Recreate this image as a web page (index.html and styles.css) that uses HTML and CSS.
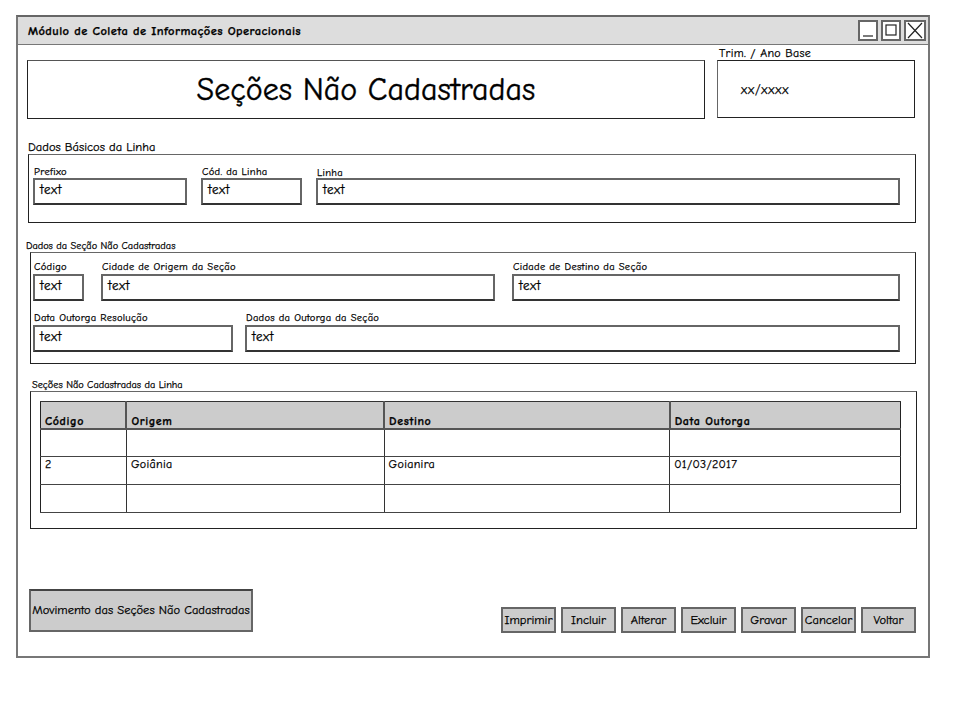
FILE: index.html
```html
<!DOCTYPE html>
<html lang="pt-BR">
<head>
<meta charset="utf-8">
<title>Módulo de Coleta de Informações Operacionais</title>
<link rel="stylesheet" href="styles.css">
</head>
<body>
<div class="window">
  <div class="titlebar">
    <span class="wtitle">Módulo de Coleta de Informações Operacionais</span>
    <div class="wctrls">
      <span class="wbtn"><svg width="16" height="17" viewBox="0 0 16 17"><line x1="3" y1="14" x2="13" y2="14" stroke="#222" stroke-width="1.2"/></svg></span>
      <span class="wbtn"><svg width="16" height="17" viewBox="0 0 16 17"><rect x="3" y="3" width="10" height="10" fill="none" stroke="#222" stroke-width="1.2"/></svg></span>
      <span class="wbtn"><svg width="18" height="17" viewBox="0 0 18 17"><path d="M2 1 L16 16 M16 1 L2 16" stroke="#222" stroke-width="1.2"/></svg></span>
    </div>
  </div>

  <div class="content">
    <div class="toprow">
      <div class="headbox">Seções Não Cadastradas</div>
      <div class="trim">
        <div class="trimlabel">Trim. / Ano Base</div>
        <div class="trimbox">xx/xxxx</div>
      </div>
    </div>

    <div class="glabel g1">Dados Básicos da Linha</div>
    <div class="group grp1">
      <div class="frow">
        <div class="field w-prefixo"><div class="flabel">Prefixo</div><div class="input">text</div></div>
        <div class="field w-cod"><div class="flabel">Cód. da Linha</div><div class="input">text</div></div>
        <div class="field w-linha"><div class="flabel">Linha</div><div class="input">text</div></div>
      </div>
    </div>

    <div class="glabel small g2">Dados da Seção Não Cadastradas</div>
    <div class="group grp2">
      <div class="frow r1">
        <div class="field w-codigo"><div class="flabel">Código</div><div class="input">text</div></div>
        <div class="field w-orig"><div class="flabel">Cidade de Origem da Seção</div><div class="input">text</div></div>
        <div class="field w-dest"><div class="flabel">Cidade de Destino da Seção</div><div class="input">text</div></div>
      </div>
      <div class="frow r2">
        <div class="field w-data"><div class="flabel">Data Outorga Resolução</div><div class="input">text</div></div>
        <div class="field w-dados"><div class="flabel">Dados da Outorga da Seção</div><div class="input">text</div></div>
      </div>
    </div>

    <div class="glabel small g3">Seções Não Cadastradas da Linha</div>
    <div class="group grp3">
      <table class="grid">
        <colgroup><col class="c1"><col class="c2"><col class="c3"><col class="c4"></colgroup>
        <thead>
          <tr><th>Código</th><th>Origem</th><th>Destino</th><th>Data Outorga</th></tr>
        </thead>
        <tbody>
          <tr><td></td><td></td><td></td><td></td></tr>
          <tr><td>2</td><td>Goiânia</td><td>Goianira</td><td>01/03/2017</td></tr>
          <tr><td></td><td></td><td></td><td></td></tr>
        </tbody>
      </table>
    </div>

    <div class="bottom">
      <div class="bigbtn">Movimento das Seções Não Cadastradas</div>
      <div class="btns">
        <span class="btn">Imprimir</span>
        <span class="btn">Incluir</span>
        <span class="btn">Alterar</span>
        <span class="btn">Excluir</span>
        <span class="btn">Gravar</span>
        <span class="btn">Cancelar</span>
        <span class="btn">Voltar</span>
      </div>
    </div>
  </div>
</div>
</body>
</html>
```

FILE: styles.css
```css
* { box-sizing: border-box; }
html, body { margin: 0; padding: 0; background: #fff; }
body {
  font-family: "Comic Sans MS", "Comic Neue", "Open Sans", "DejaVu Sans", sans-serif;
  color: #000;
  -webkit-text-stroke: 0.25px #000;
}
.window {
  margin: 15px 0 0 16px;
  width: 914px;
  height: 643px;
  border: 2px solid #777;
  border-top-color: #666;
  background: #fff;
  display: flex;
  flex-direction: column;
}
.titlebar {
  height: 28px;
  background: #ddd;
  border-bottom: 1px solid #777;
  display: flex;
  align-items: center;
  justify-content: space-between;
  padding: 0 2px 0 10px;
}
.wtitle { font-weight: bold; font-size: 12.5px; letter-spacing: 0.4px; }
.wctrls { display: flex; gap: 3px; }
.wbtn {
  width: 20px; height: 21px;
  border: 2px solid #666;
  display: flex; align-items: center; justify-content: center;
  background: #fff;
}
.wbtn:last-child { width: 22px; }
.content { padding: 1px 12px 0 9px; flex: 1; }
.toprow { display: flex; gap: 12px; }
.headbox {
  margin-top: 14px;
  width: 678px; height: 59px;
  border: 1px solid #222;
  border-top-color: #555;
  display: flex; align-items: center; justify-content: center;
  font-size: 32px;
  -webkit-text-stroke: 0.4px #000;
}
.trimlabel { font-size: 12px; letter-spacing: 0.3px; height: 14px; line-height: 14px; padding-left: 2px; }
.trimbox {
  width: 198px; height: 58px;
  border: 1px solid #222;
  border-left-color: #666;
  font-size: 13px;
  letter-spacing: 0.8px;
  padding: 21px 0 0 23px;
}
.glabel { font-size: 12.5px; line-height: 14px; }
.glabel.small { font-size: 10.3px; line-height: 12px; }
.g1 { margin: 21px 0 0 1px; }
.g2 { margin: 17px 0 0 -1px; }
.g3 { margin: 15px 0 0 5px; }
.group {
  border: 1px solid #222;
  border-top-color: #666;
}
.grp1 { margin-left: 1px; width: 888px; height: 69px; padding: 11px 0 0 4px; }
.grp2 { margin-left: 3px; width: 886px; height: 112px; padding: 8px 0 0 2px; }
.grp3 { margin-left: 3px; width: 887px; height: 138px; padding: 9px 0 0 9px; }
.frow { display: flex; align-items: flex-end; }
.grp1 .frow { gap: 14px; }
.grp2 .frow { gap: 17px; }
.grp2 .r2 { gap: 12px; margin-top: 11px; }
.flabel { font-size: 10.5px; letter-spacing: 0.3px; line-height: 12px; height: 12px; padding-left: 1px; white-space: nowrap; }
.grp2 .flabel { line-height: 13px; height: 13px; }
.w-linha .flabel { height: 11px; }
.input {
  height: 27px;
  border: 2px solid #666;
  border-bottom-color: #333;
  font-size: 13px;
  letter-spacing: 0.6px;
  padding: 2px 0 0 5px;
}
.w-prefixo { width: 154px; }
.w-cod { width: 101px; }
.w-linha { width: 584px; }
.w-codigo { width: 51px; }
.w-orig { width: 394px; }
.w-dest { width: 388px; }
.w-data { width: 200px; }
.w-dados { width: 655px; }
.grid {
  border-collapse: collapse;
  width: 861px;
  font-size: 12px;
  border: 1px solid #222;
}
.grid .c1 { width: 86px; }
.grid .c2 { width: 258px; }
.grid .c3 { width: 286px; }
.grid .c4 { width: 231px; }
.grid th {
  background: #ccc;
  height: 27px;
  text-align: left;
  vertical-align: bottom;
  font-weight: bold;
  letter-spacing: 0.6px;
  padding: 0 4px 0 4px;
  border-left: 2px solid #555;
  border-bottom: 2px solid #555;
  border-top: 1px solid #333;
  line-height: 14px;
}
.grid td {
  height: 28px;
  vertical-align: top;
  padding: 0 4px;
  letter-spacing: 0.3px;
  border-left: 1px solid #333;
  border-bottom: 1px solid #444;
  line-height: 14px;
}
.grid th:first-child, .grid td:first-child { border-left: 1px solid #222; }
.bottom {
  margin-top: 60px;
  display: flex;
  justify-content: space-between;
  align-items: flex-end;
}
.bigbtn {
  margin-left: 2px;
  width: 224px; height: 43px;
  background: #ccc;
  border: 2px solid #666;
  border-top-color: #444;
  font-size: 12.5px;
  display: flex; align-items: center; justify-content: center;
  padding-bottom: 2px;
  white-space: nowrap;
}
.btns { display: flex; gap: 5px; margin-bottom: -1px; }
.btn {
  height: 26px;
  background: #ccc;
  border: 2px solid #666;
  font-size: 12.5px;
  display: flex; align-items: center; justify-content: center;
  width: 55px;
  white-space: nowrap;
}
```
